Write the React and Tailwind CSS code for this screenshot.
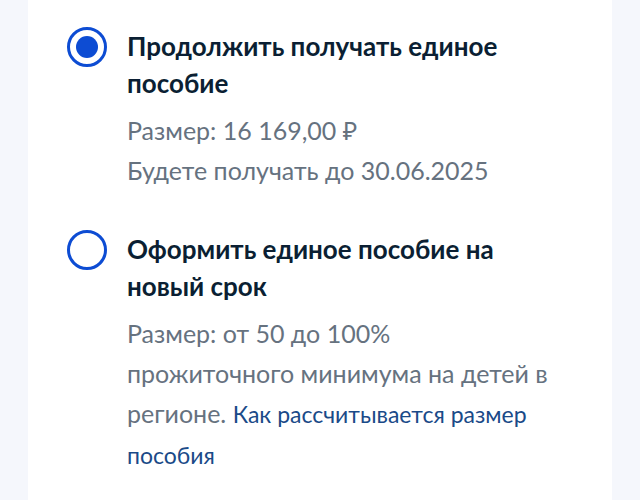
import React, { useState } from 'react';

const options = [
    {
        id: 'continue',
        title: 'Продолжить получать единое пособие',
        lines: ['Размер: 16 169,00 ₽', 'Будете получать до 30.06.2025'],
    },
    {
        id: 'new',
        title: 'Оформить единое пособие на новый срок',
        text: 'Размер: от 50 до 100% прожиточного минимума на детей в регионе.',
        link: 'Как рассчитывается размер пособия',
    },
];

const Radio = ({ checked }) => (
    <span className="mt-[-1px] flex h-10 w-10 shrink-0 items-center justify-center rounded-full border-[3px] border-[#0d4cd3] bg-white">
        {checked && <span className="h-[22px] w-[22px] rounded-full bg-[#0d4cd3]" />}
    </span>
);

const App = () => {
    const [selected, setSelected] = useState('continue');

    return (
        <div className="min-h-[500px] bg-[#f5f7fc] font-['Lato','Noto_Sans',sans-serif]">
            <div className="mx-[28px] min-h-[500px] bg-white pl-[39px] pr-6 pt-[28px]">
                {options.map((opt, i) => (
                    <div
                        key={opt.id}
                        onClick={() => setSelected(opt.id)}
                        className={`flex cursor-pointer gap-5 ${i > 0 ? 'mt-[41px]' : ''}`}
                    >
                        <Radio checked={selected === opt.id} />
                        <div className="w-[434px]">
                            <h3 className="text-[26px] font-bold leading-[37px] text-[#0b1f33]">{opt.title}</h3>
                            <div className="mt-2 text-[25px] leading-[40px] text-[#66727f]">
                                {opt.lines && opt.lines.map((line) => <p key={line}>{line}</p>)}
                                {opt.text && (
                                    <p>
                                        {opt.text}{' '}
                                        <a href="#" className="text-[23px] text-[#1a4a88]">{opt.link}</a>
                                    </p>
                                )}
                            </div>
                        </div>
                    </div>
                ))}
            </div>
        </div>
    );
};

export default App;
